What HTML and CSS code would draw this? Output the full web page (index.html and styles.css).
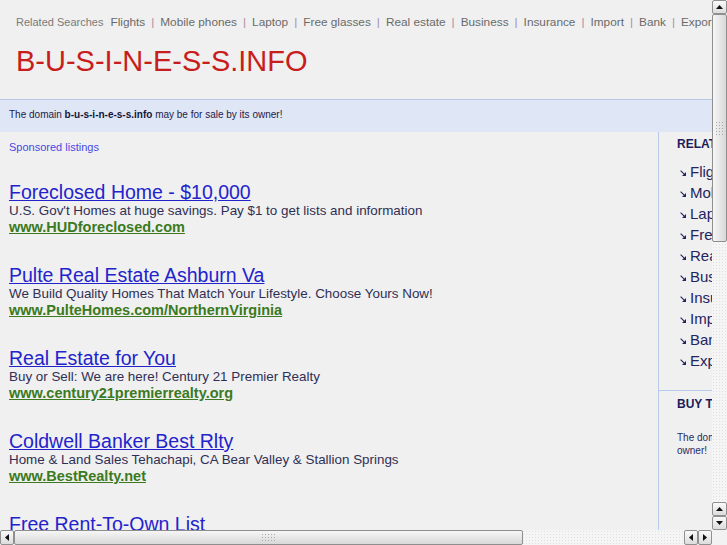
FILE: index.html
```html
<!DOCTYPE html>
<html>
<head>
<meta charset="utf-8">
<title>b-u-s-i-n-e-s-s.info</title>
<link rel="stylesheet" href="styles.css">
</head>
<body>
<div class="window">
  <div class="upper">
    <div class="viewport">
      <div class="page">
        <div class="header">
          <div class="related"><span class="rel-label">Related Searches</span><a class="rel-link">Flights</a><span class="sep">|</span><a class="rel-link">Mobile phones</a><span class="sep">|</span><a class="rel-link">Laptop</a><span class="sep">|</span><a class="rel-link">Free glasses</a><span class="sep">|</span><a class="rel-link">Real estate</a><span class="sep">|</span><a class="rel-link">Business</a><span class="sep">|</span><a class="rel-link">Insurance</a><span class="sep">|</span><a class="rel-link">Import</a><span class="sep">|</span><a class="rel-link">Bank</a><span class="sep">|</span><a class="rel-link">Export</a></div>
          <h1 class="title">B-U-S-I-N-E-S-S.INFO</h1>
        </div>
        <div class="notice">The domain <b>b-u-s-i-n-e-s-s.info</b> may be for sale by its owner!</div>
        <div class="main">
          <div class="ads">
            <div class="sponsored">Sponsored listings</div>
            <div class="ad-list">
              <div class="ad">
                <a class="ad-title">Foreclosed Home - $10,000</a>
                <div class="ad-desc">U.S. Gov't Homes at huge savings. Pay $1 to get lists and information</div>
                <a class="ad-url">www.HUDforeclosed.com</a>
              </div>
              <div class="ad">
                <a class="ad-title">Pulte Real Estate Ashburn Va</a>
                <div class="ad-desc">We Build Quality Homes That Match Your Lifestyle. Choose Yours Now!</div>
                <a class="ad-url">www.PulteHomes.com/NorthernVirginia</a>
              </div>
              <div class="ad">
                <a class="ad-title">Real Estate for You</a>
                <div class="ad-desc">Buy or Sell: We are here! Century 21 Premier Realty</div>
                <a class="ad-url">www.century21premierrealty.org</a>
              </div>
              <div class="ad">
                <a class="ad-title">Coldwell Banker Best Rlty</a>
                <div class="ad-desc">Home &amp; Land Sales Tehachapi, CA Bear Valley &amp; Stallion Springs</div>
                <a class="ad-url">www.BestRealty.net</a>
              </div>
              <div class="ad">
                <a class="ad-title">Free Rent-To-Own List</a>
                <div class="ad-desc">Find Rent-To-Own Homes in your area. Get the free list today</div>
                <a class="ad-url">www.RentToOwnList.com</a>
              </div>
            </div>
          </div>
          <div class="sidebar">
            <div class="side-sec">
              <div class="side-head">RELATED SEARCHES</div>
              <ul class="side-list">
                <li><svg class="arr" viewBox="0 0 6 6" width="6" height="6"><path d="M0.6 0.6 L4.2 4.2" stroke="#23235f" stroke-width="1.1"/><path d="M6 2 L6 6 L2 6 Z" fill="#23235f"/></svg><a>Flights</a></li>
                <li><svg class="arr" viewBox="0 0 6 6" width="6" height="6"><path d="M0.6 0.6 L4.2 4.2" stroke="#23235f" stroke-width="1.1"/><path d="M6 2 L6 6 L2 6 Z" fill="#23235f"/></svg><a>Mobile phones</a></li>
                <li><svg class="arr" viewBox="0 0 6 6" width="6" height="6"><path d="M0.6 0.6 L4.2 4.2" stroke="#23235f" stroke-width="1.1"/><path d="M6 2 L6 6 L2 6 Z" fill="#23235f"/></svg><a>Laptop</a></li>
                <li><svg class="arr" viewBox="0 0 6 6" width="6" height="6"><path d="M0.6 0.6 L4.2 4.2" stroke="#23235f" stroke-width="1.1"/><path d="M6 2 L6 6 L2 6 Z" fill="#23235f"/></svg><a>Free glasses</a></li>
                <li><svg class="arr" viewBox="0 0 6 6" width="6" height="6"><path d="M0.6 0.6 L4.2 4.2" stroke="#23235f" stroke-width="1.1"/><path d="M6 2 L6 6 L2 6 Z" fill="#23235f"/></svg><a>Real estate</a></li>
                <li><svg class="arr" viewBox="0 0 6 6" width="6" height="6"><path d="M0.6 0.6 L4.2 4.2" stroke="#23235f" stroke-width="1.1"/><path d="M6 2 L6 6 L2 6 Z" fill="#23235f"/></svg><a>Business</a></li>
                <li><svg class="arr" viewBox="0 0 6 6" width="6" height="6"><path d="M0.6 0.6 L4.2 4.2" stroke="#23235f" stroke-width="1.1"/><path d="M6 2 L6 6 L2 6 Z" fill="#23235f"/></svg><a>Insurance</a></li>
                <li><svg class="arr" viewBox="0 0 6 6" width="6" height="6"><path d="M0.6 0.6 L4.2 4.2" stroke="#23235f" stroke-width="1.1"/><path d="M6 2 L6 6 L2 6 Z" fill="#23235f"/></svg><a>Import</a></li>
                <li><svg class="arr" viewBox="0 0 6 6" width="6" height="6"><path d="M0.6 0.6 L4.2 4.2" stroke="#23235f" stroke-width="1.1"/><path d="M6 2 L6 6 L2 6 Z" fill="#23235f"/></svg><a>Bank</a></li>
                <li><svg class="arr" viewBox="0 0 6 6" width="6" height="6"><path d="M0.6 0.6 L4.2 4.2" stroke="#23235f" stroke-width="1.1"/><path d="M6 2 L6 6 L2 6 Z" fill="#23235f"/></svg><a>Export</a></li>
              </ul>
            </div>
            <div class="side-sec side-buy">
              <div class="side-head">BUY THIS DOMAIN</div>
              <p class="side-text">The domain b-u-s-i-n-e-s-s.info may be for sale by its owner!</p>
            </div>
          </div>
        </div>
      </div>
    </div>
    <div class="vscroll">
      <div class="sb-btn"><svg viewBox="0 0 7 4" width="7" height="4"><path d="M3.5 0 L7 4 L0 4 Z" fill="#111"/></svg></div>
      <div class="sb-thumb v-thumb"><span class="grip"></span></div>
      <div class="sb-track"></div>
      <div class="sb-btn"><svg viewBox="0 0 7 4" width="7" height="4"><path d="M3.5 0 L7 4 L0 4 Z" fill="#111"/></svg></div>
      <div class="sb-btn"><svg viewBox="0 0 7 4" width="7" height="4"><path d="M0 0 L7 0 L3.5 4 Z" fill="#111"/></svg></div>
    </div>
  </div>
  <div class="lower">
    <div class="hscroll">
      <div class="sb-btn"><svg viewBox="0 0 4 7" width="4" height="7"><path d="M0 3.5 L4 0 L4 7 Z" fill="#111"/></svg></div>
      <div class="sb-thumb h-thumb"><span class="grip"></span></div>
      <div class="sb-track"></div>
      <div class="sb-btn"><svg viewBox="0 0 4 7" width="4" height="7"><path d="M0 3.5 L4 0 L4 7 Z" fill="#111"/></svg></div>
      <div class="sb-btn"><svg viewBox="0 0 4 7" width="4" height="7"><path d="M4 3.5 L0 0 L0 7 Z" fill="#111"/></svg></div>
    </div>
    <div class="corner"></div>
  </div>
</div>
</body>
</html>
```

FILE: styles.css
```css
* { box-sizing: border-box; }
html, body { margin: 0; padding: 0; }
body {
  width: 727px;
  height: 545px;
  overflow: hidden;
  background: #f0f0f0;
  font-family: "Liberation Sans", Arial, sans-serif;
}
.window {
  display: flex;
  flex-direction: column;
  width: 727px;
  height: 545px;
}
.upper {
  display: flex;
  height: 530px;
}
.viewport {
  width: 712px;
  height: 530px;
  overflow: hidden;
}
.page {
  width: 980px;
  background: #f0f0f0;
}

/* header */
.header {
  padding: 14px 0 0 16px;
}
.related {
  white-space: nowrap;
  line-height: 14px;
  height: 14px;
}
.rel-label {
  font-size: 11px;
  color: #7a7a7a;
  margin-right: 7px;
}
.rel-link {
  font-size: 11.8px;
  color: #6a6a6a;
}
.sep {
  font-size: 11.8px;
  color: #a88fa6;
  margin: 0 6px;
}
.title {
  margin: 16px 0 21px 0;
  font-size: 29px;
  line-height: 34px;
  font-weight: normal;
  color: #c81d1d;
}

/* notice bar */
.notice {
  border-top: 1px solid #b6c6e4;
  background: #dfe6f5;
  padding: 9px 9px 11px;
  font-size: 10px;
  line-height: 12px;
  color: #1c1c4a;
  height: 33px;
}
.notice b { color: #14143c; }

/* main */
.main {
  display: flex;
  min-height: 420px;
}
.ads {
  width: 658px;
  padding: 9px 0 0 9px;
}
.sponsored {
  font-size: 11px;
  line-height: 13px;
  color: #4848e6;
}
.ad-list {
  display: flex;
  flex-direction: column;
  gap: 29px;
  margin-top: 27px;
}
.ad { display: flex; flex-direction: column; align-items: flex-start; }
.ad-title {
  font-size: 19.5px;
  line-height: 22px;
  color: #2323cc;
  text-decoration: underline;
  white-space: nowrap;
}
.ad-desc {
  font-size: 13.4px;
  line-height: 16px;
  color: #2f2f55;
  white-space: nowrap;
}
.ad-url {
  font-size: 14.5px;
  line-height: 16px;
  font-weight: bold;
  color: #3b7a1e;
  text-decoration: underline;
  white-space: nowrap;
}

/* sidebar */
.sidebar {
  width: 300px;
  border-left: 1px solid #b8cbec;
}
.side-sec {
  padding: 5px 0 19px 18px;
}
.side-buy {
  border-top: 1px solid #b8cbec;
  padding-top: 6px;
}
.side-head {
  font-size: 12px;
  line-height: 14px;
  font-weight: bold;
  color: #1c1c58;
}
.side-list {
  list-style: none;
  margin: 10px 0 0 0;
  padding: 0;
}
.side-list li {
  font-size: 15px;
  line-height: 21px;
  height: 21px;
  color: #24245e;
  padding-left: 3px;
  white-space: nowrap;
}
.arr {
  display: inline-block;
  vertical-align: 1px;
  margin-right: 4px;
}
.side-text {
  margin: 20px 0 0 0;
  width: 250px;
  font-size: 10px;
  line-height: 13px;
  color: #2a2a62;
}

/* scrollbars */
.vscroll {
  width: 15px;
  height: 530px;
  display: flex;
  flex-direction: column;
  background-color: #f5f5f5;
  background-image: radial-gradient(#e0e0e0 0.7px, transparent 0.8px);
  background-size: 3px 3px;
}
.lower {
  display: flex;
  height: 15px;
}
.hscroll {
  width: 712px;
  height: 15px;
  display: flex;
  background-color: #f5f5f5;
  background-image: radial-gradient(#e0e0e0 0.7px, transparent 0.8px);
  background-size: 3px 3px;
}
.corner {
  width: 15px;
  height: 15px;
  background: #f2f2f2;
}
.sb-btn {
  width: 14px;
  height: 14px;
  flex: none;
  display: flex;
  align-items: center;
  justify-content: center;
  border: 1px solid #909090;
  border-radius: 2px;
  background: linear-gradient(#fafafa, #dcdcdc);
}
.vscroll .sb-btn { width: 15px; }
.hscroll .sb-btn { height: 15px; }
.sb-thumb {
  flex: none;
  border: 1px solid #8e8e8e;
  border-radius: 2px;
  display: flex;
  align-items: center;
  justify-content: center;
}
.v-thumb {
  height: 228px;
  background: linear-gradient(90deg, #f6f6f6, #d8d8d8);
}
.h-thumb {
  width: 509px;
  background: linear-gradient(#f6f6f6, #d8d8d8);
}
.sb-track { flex: 1; }
.grip {
  display: block;
  background-image: radial-gradient(#a9a9a9 0.6px, transparent 0.8px);
  background-size: 3px 3px;
}
.v-thumb .grip { width: 9px; height: 15px; }
.h-thumb .grip { width: 15px; height: 9px; }
```
